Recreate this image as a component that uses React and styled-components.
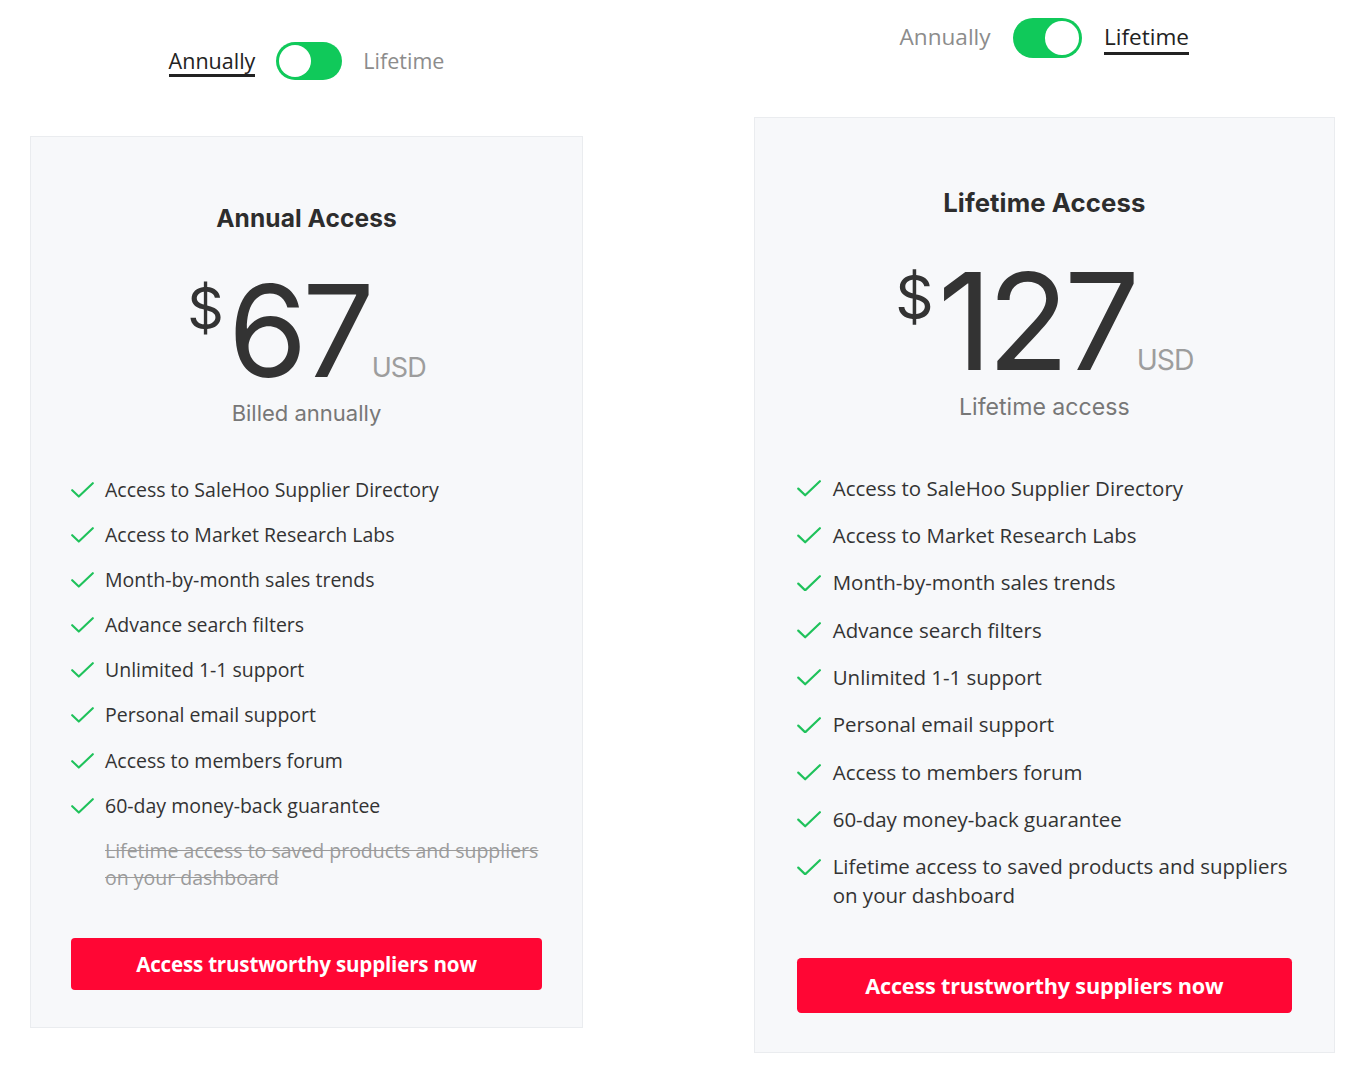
import React from "react";
import styled, { createGlobalStyle } from "styled-components";

const Global = createGlobalStyle`
  html, body { margin: 0; padding: 0; background: #ffffff; }
  body { font-family: "Open Sans", "Liberation Sans", sans-serif; }
  * { box-sizing: border-box; }
`;

const Page = styled.div`
  display: flex;
  align-items: flex-start;
  gap: 171px;
  padding-left: 30px;
  width: 1364px;
`;

const Panel = styled.section`
  --s: ${(p) => p.$s};
  width: calc(553px * var(--s));
  padding-top: ${(p) => p.$top}px;
  display: flex;
  flex-direction: column;
  align-items: center;
`;

const ToggleRow = styled.div`
  display: flex;
  align-items: center;
  gap: calc(21px * var(--s));
  height: calc(38px * var(--s));
  margin-bottom: calc(56px * var(--s));
`;

const ToggleLabel = styled.span`
  font-family: "Open Sans", sans-serif;
  font-size: calc(21.5px * var(--s));
  line-height: calc(25px * var(--s));
  color: ${(p) => (p.$active ? "#222222" : "#8c8c8c")};
  border-bottom: calc(3px * var(--s)) solid
    ${(p) => (p.$active ? "#222222" : "transparent")};
  padding-bottom: calc(1px * var(--s));
  margin-top: calc(3px * var(--s));
`;

const Switch = styled.div`
  width: calc(66px * var(--s));
  height: calc(38px * var(--s));
  border-radius: 999px;
  background: #10c95a;
  padding: calc(3px * var(--s));
  display: flex;
  justify-content: ${(p) => (p.$on ? "flex-end" : "flex-start")};
`;

const Knob = styled.span`
  width: calc(32px * var(--s));
  height: calc(32px * var(--s));
  border-radius: 50%;
  background: #ffffff;
`;

const Card = styled.div`
  width: 100%;
  background: #f7f8fa;
  border: 1px solid #eaecef;
  padding: calc(66px * var(--s)) calc(40px * var(--s)) calc(37.5px * var(--s));
  display: flex;
  flex-direction: column;
`;

const Title = styled.h2`
  margin: 0;
  font-family: "Inter", "Lato", sans-serif;
  font-weight: 700;
  font-size: calc(24.5px * var(--s));
  line-height: calc(30px * var(--s));
  color: #2d2d2d;
  text-align: center;
  letter-spacing: 0.1px;
`;

const PriceRow = styled.div`
  display: flex;
  justify-content: center;
  align-items: flex-end;
  margin-top: calc(48px * var(--s));
  font-family: "Inter", "Lato", sans-serif;
  color: #333333;
`;

const Currency = styled.span`
  align-self: flex-start;
  font-size: calc(57px * var(--s));
  line-height: 1;
  margin-top: calc(-1px * var(--s));
  margin-right: calc(4px * var(--s));
`;

const Amount = styled.span`
  font-size: calc(128px * var(--s));
  line-height: calc(100px * var(--s));
  letter-spacing: calc(-5px * var(--s));
  font-weight: 400;
`;

const Unit = styled.span`
  font-size: calc(27px * var(--s));
  line-height: 1;
  color: #9d9d9d;
  margin-left: calc(2px * var(--s));
  letter-spacing: calc(-1px * var(--s));
`;

const Subtitle = styled.div`
  margin-top: calc(18px * var(--s));
  text-align: center;
  font-family: "Inter", "Lato", sans-serif;
  font-size: calc(22px * var(--s));
  line-height: calc(28px * var(--s));
  color: #777777;
`;

const FeatureList = styled.ul`
  list-style: none;
  margin: calc(49px * var(--s)) 0 0;
  padding: 0;
  display: flex;
  flex-direction: column;
  gap: calc(18.1px * var(--s));
`;

const Feature = styled.li`
  display: flex;
  align-items: flex-start;
  gap: calc(11px * var(--s));
  padding-left: ${(p) => (p.$muted ? "calc(34px * var(--s))" : "0")};
  font-family: "Open Sans", sans-serif;
  font-size: calc(19.5px * var(--s));
  line-height: calc(27px * var(--s));
  color: ${(p) => (p.$muted ? "#9b9b9b" : "#333333")};
  text-decoration: ${(p) => (p.$muted ? "line-through" : "none")};
`;

const CheckIcon = styled.svg`
  flex: none;
  width: calc(23px * var(--s));
  height: calc(16px * var(--s));
  margin-top: calc(6px * var(--s));
`;

const CTA = styled.button`
  margin-top: calc(47px * var(--s));
  height: calc(52px * var(--s));
  width: 100%;
  border: none;
  border-radius: calc(4px * var(--s));
  background: #ff0634;
  color: #ffffff;
  font-family: "Open Sans", sans-serif;
  font-weight: 700;
  font-size: calc(20.6px * var(--s));
  letter-spacing: -0.2px;
  cursor: pointer;
`;

const features = [
  "Access to SaleHoo Supplier Directory",
  "Access to Market Research Labs",
  "Month-by-month sales trends",
  "Advance search filters",
  "Unlimited 1-1 support",
  "Personal email support",
  "Access to members forum",
  "60-day money-back guarantee",
];

const extra = "Lifetime access to saved products and suppliers on your dashboard";

function Check() {
  return (
    <CheckIcon viewBox="0 0 23 16" fill="none">
      <path
        d="M1.2 8.2 L7.8 14.6 L21.8 1.2"
        stroke="#1fc25b"
        strokeWidth="2.1"
        strokeLinecap="round"
        strokeLinejoin="round"
      />
    </CheckIcon>
  );
}

function PricingPanel({ scale, top, lifetime }) {
  return (
    <Panel $s={scale} $top={top}>
      <ToggleRow>
        <ToggleLabel $active={!lifetime}>Annually</ToggleLabel>
        <Switch $on={lifetime}>
          <Knob />
        </Switch>
        <ToggleLabel $active={lifetime}>Lifetime</ToggleLabel>
      </ToggleRow>
      <Card>
        <Title>{lifetime ? "Lifetime Access" : "Annual Access"}</Title>
        <PriceRow>
          <Currency>$</Currency>
          <Amount>{lifetime ? "127" : "67"}</Amount>
          <Unit>USD</Unit>
        </PriceRow>
        <Subtitle>{lifetime ? "Lifetime access" : "Billed annually"}</Subtitle>
        <FeatureList>
          {features.map((f) => (
            <Feature key={f}>
              <Check />
              <span>{f}</span>
            </Feature>
          ))}
          {lifetime ? (
            <Feature>
              <Check />
              <span>{extra}</span>
            </Feature>
          ) : (
            <Feature $muted>
              <span>{extra}</span>
            </Feature>
          )}
        </FeatureList>
        <CTA>Access trustworthy suppliers now</CTA>
      </Card>
    </Panel>
  );
}

export default function App() {
  return (
    <>
      <Global />
      <Page>
        <PricingPanel scale={1} top={42} lifetime={false} />
        <PricingPanel scale={1.05} top={18} lifetime />
      </Page>
    </>
  );
}
